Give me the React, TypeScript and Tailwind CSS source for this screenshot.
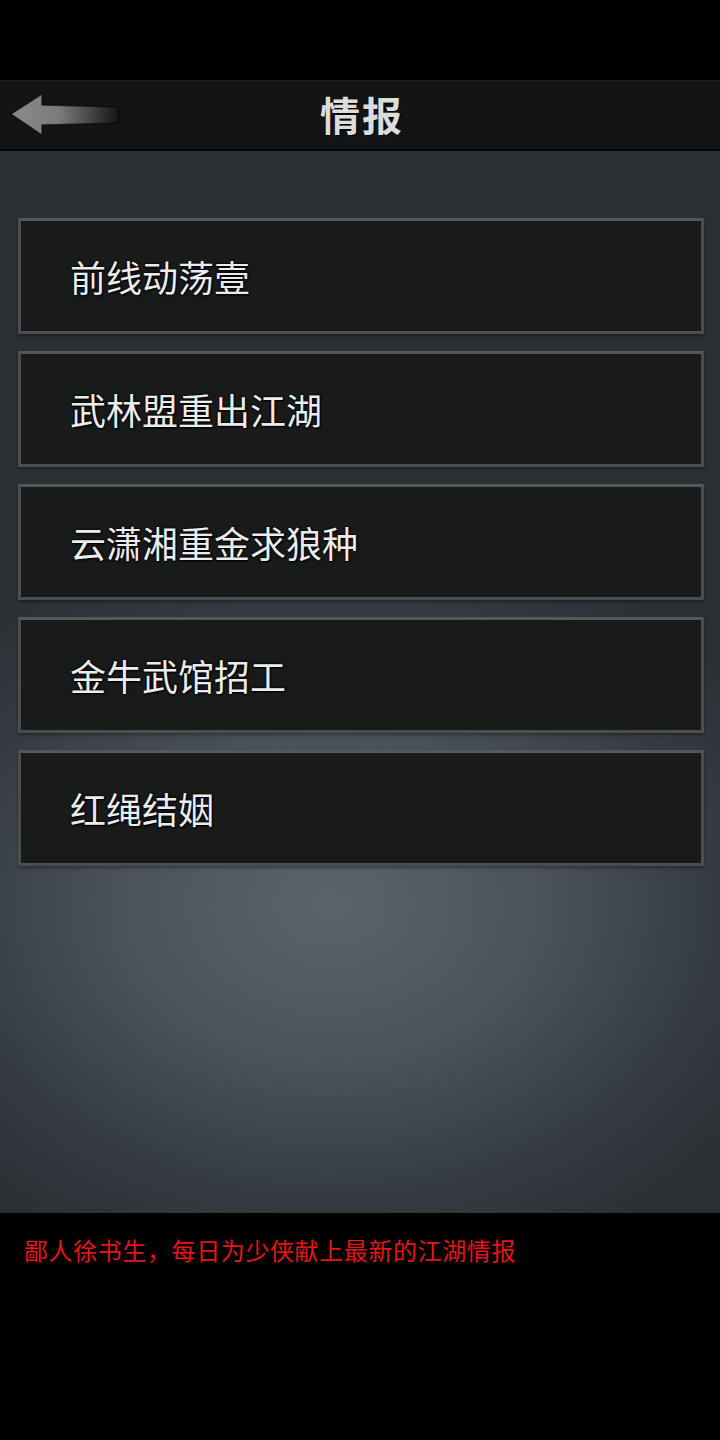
import React from "react";

const items = ["前线动荡壹", "武林盟重出江湖", "云潇湘重金求狼种", "金牛武馆招工", "红绳结姻"];

const cjk = { fontFamily: '"Noto Sans CJK SC", "Noto Sans", sans-serif' };

const BackArrow: React.FC = () => (
  <svg width="112" height="46" viewBox="0 0 112 46">
    <defs>
      <linearGradient id="shaft" x1="0" y1="0" x2="1" y2="0">
        <stop offset="0" stopColor="#8c8c8c" />
        <stop offset="0.45" stopColor="#7a7a7a" />
        <stop offset="1" stopColor="#7a7a7a" stopOpacity="0" />
      </linearGradient>
    </defs>
    <path
      d="M2 22 L33 2 L33 13 L110 15 L110 31 L33 33 L33 43 Z"
      fill="url(#shaft)"
      stroke="#050505"
      strokeOpacity="0.6"
      strokeWidth="1.5"
    />
  </svg>
);

const App: React.FC = () => {
  return (
    <div className="flex flex-col w-full h-[1440px] bg-black" style={cjk}>
      <div className="h-[80px] bg-black" />

      {/* header */}
      <header className="relative h-[71px] flex items-center justify-center bg-[#131415] border-t border-[#1c1d1e] border-b-2 border-b-[#080808]">
        <div className="absolute left-[9px] top-[11px]">
          <BackArrow />
        </div>
        <h1 className="text-[40px] font-bold tracking-[2px] text-[#dcdcdc] [text-shadow:1px_1px_2px_#000] ml-[4px] -mt-[3px]">
          情报
        </h1>
      </header>

      {/* list */}
      <main className="h-[1062px] pl-[18px] pr-[16px] pt-[67px] flex flex-col gap-[17px] bg-[radial-gradient(ellipse_70%_36%_at_46%_71%,#5a646d_0%,#4b545c_40%,#363c43_75%,#2b3035_100%)]">
        {items.map((t) => (
          <div
            key={t}
            className="h-[116px] flex items-center pl-[49px] bg-[#191a1a] border-[3px] border-[#4b4d4f] border-t-[#555759] shadow-[0_2px_3px_rgba(0,0,0,0.35)]"
          >
            <span className="text-[36px] leading-none text-[#ececec] [text-shadow:0_0_2px_#000,0_0_2px_#000,1px_1px_2px_#000]">
              {t}
            </span>
          </div>
        ))}
      </main>

      {/* footer */}
      <footer className="flex-1 bg-black px-[24px] pt-[24px]">
        <p className="text-[24px] tracking-[0.6px] leading-[26px] text-[#e51616]">鄙人徐书生，每日为少侠献上最新的江湖情报</p>
      </footer>
    </div>
  );
};

export default App;
